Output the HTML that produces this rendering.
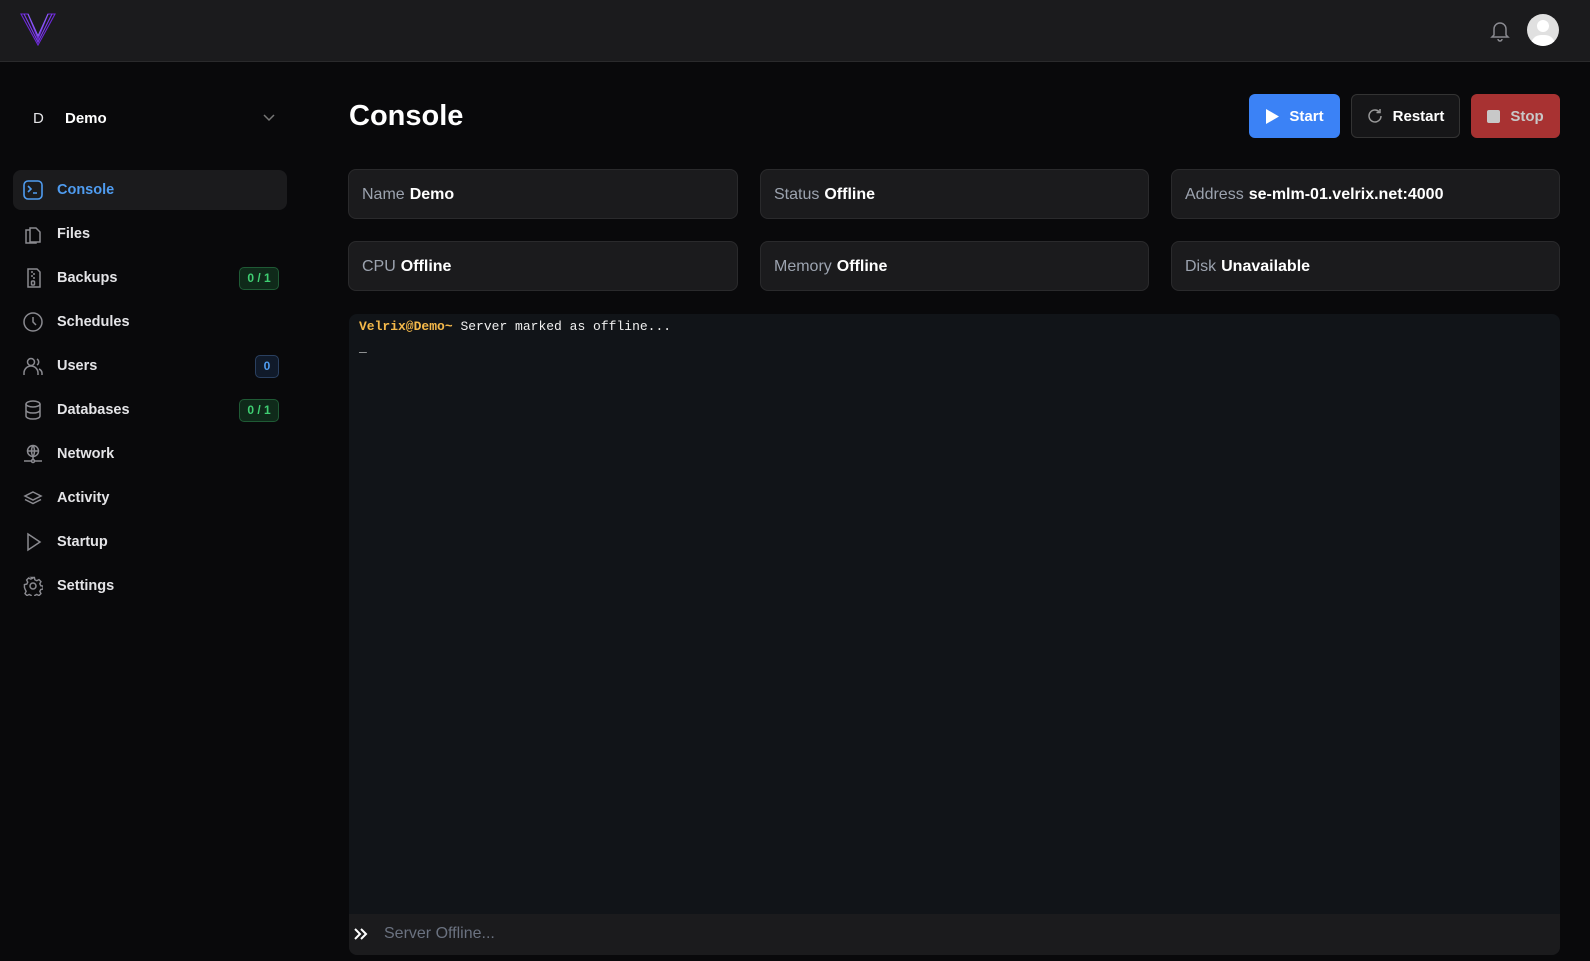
<!DOCTYPE html>
<html><head><meta charset="utf-8"><style>
*{box-sizing:border-box;margin:0;padding:0}
body{width:1590px;height:961px;background:#09090b;font-family:"Liberation Sans",sans-serif;color:#fff;position:relative;overflow:hidden}
.hdr{position:absolute;left:0;top:0;width:1590px;height:62px;background:#1b1b1d;border-bottom:1px solid #2a2a2c}
.abs{position:absolute}
.nav{position:absolute;left:13px;width:274px;height:40px;border-radius:8px;display:flex;align-items:center;font-size:14.5px;font-weight:bold;color:#e4e4e7}
.nav svg{position:absolute;left:10px;top:10px}
.nav span{position:absolute;left:44px}
.nav.act{background:#1b1b1d;color:#4f9cf0}
.badge{position:absolute;right:8px;height:23px;border-radius:5px;font-size:12px;font-weight:bold;display:flex;align-items:center;justify-content:center}
.g{background:#0f2a1a;border:1px solid #1f5a35;color:#3fcf72;width:40px}
.b{background:#101a2a;border:1px solid #2a4060;color:#4f9cf0;width:24px}
.card{position:absolute;height:50px;background:#1b1b1d;border:1px solid #2a2a2c;border-radius:8px;font-size:16px;color:#9ca3af;padding-left:13px;padding-top:2px;display:flex;align-items:center}
.card b{color:#fff;margin-left:5px}
.btn{position:absolute;top:94px;height:44px;border-radius:6px;font-size:15px;font-weight:bold;display:flex;align-items:center;justify-content:center;gap:10px}
</style></head><body>
<div class="hdr">
<svg class="abs" style="left:20px;top:13px" width="36" height="33" viewBox="0 0 36 33"><g fill="none" stroke-width="1.1"><path d="M1 1h7l10 25 10-25h7L18 32z" stroke="#6d28d9"/><path d="M4 1l14 28L32 1" stroke="#7c3aed"/><path d="M8 1l10 22L28 1" stroke="#8b5cf6"/></g></svg>
<svg class="abs" style="left:1490px;top:20px" width="20" height="22" viewBox="0 0 20 22" fill="none" stroke="#8a8a90" stroke-width="1.5"><path d="M4 15V9a6 6 0 0112 0v6l2 2H2z"/><path d="M8 19a2 2 0 004 0"/></svg>
<div class="abs" style="left:1527px;top:14px;width:32px;height:32px;border-radius:50%;background:#e0e0e0;overflow:hidden"><div class="abs" style="left:10px;top:6px;width:12px;height:12px;border-radius:50%;background:#fff"></div><div class="abs" style="left:4px;top:21px;width:24px;height:16px;border-radius:10px 10px 0 0;background:#fff"></div></div>
</div>
<div class="abs" style="left:33px;top:110px;font-size:15px;color:#e4e4e7">D</div>
<div class="abs" style="left:65px;top:110px;font-size:15px;font-weight:bold">Demo</div>
<svg class="abs" style="left:263px;top:114px" width="12" height="8" viewBox="0 0 12 8" fill="none" stroke="#777" stroke-width="1.5"><path d="M1 1l5 5 5-5"/></svg>

<div class="nav act" style="top:170px"><svg width="20" height="20" viewBox="0 0 20 20" fill="none" stroke="#4f9cf0" stroke-width="1.6"><rect x="1" y="1" width="18" height="18" rx="4"/><path d="M5 6l3 3-3 3M10 13h4"/></svg><span>Console</span></div>
<div class="nav" style="top:214px"><svg width="20" height="20" viewBox="0 0 20 20" fill="none" stroke="#8a8a90" stroke-width="1.5"><path d="M7 4h6l4 4v10H7z"/><path d="M7 6H3v13h10v-1"/></svg><span>Files</span></div>
<div class="nav" style="top:258px"><svg width="20" height="20" viewBox="0 0 20 20" fill="none" stroke="#8a8a90" stroke-width="1.5"><path d="M5 1h9l3 3v15H5z"/><path d="M9 3v2M11 5v2M9 7v2M11 9v2"/><rect x="8.5" y="13" width="3" height="4" rx="1"/></svg><span>Backups</span><div class="badge g">0 / 1</div></div>
<div class="nav" style="top:302px"><svg width="20" height="20" viewBox="0 0 20 20" fill="none" stroke="#8a8a90" stroke-width="1.5"><circle cx="10" cy="10" r="9"/><path d="M10 5v5l3 3"/></svg><span>Schedules</span></div>
<div class="nav" style="top:346px"><svg width="20" height="20" viewBox="0 0 20 20" fill="none" stroke="#8a8a90" stroke-width="1.5"><circle cx="8" cy="6" r="3.5"/><path d="M1 19v-2a6 6 0 0114 0v2M14 3a3.5 3.5 0 010 6M19 19v-2a5 5 0 00-3-4"/></svg><span>Users</span><div class="badge b">0</div></div>
<div class="nav" style="top:390px"><svg width="20" height="20" viewBox="0 0 20 20" fill="none" stroke="#8a8a90" stroke-width="1.5"><ellipse cx="10" cy="4" rx="7" ry="3"/><path d="M3 4v12c0 1.7 3 3 7 3s7-1.3 7-3V4M3 10c0 1.7 3 3 7 3s7-1.3 7-3"/></svg><span>Databases</span><div class="badge g">0 / 1</div></div>
<div class="nav" style="top:434px"><svg width="20" height="20" viewBox="0 0 20 20" fill="none" stroke="#8a8a90" stroke-width="1.5"><circle cx="10" cy="7" r="5.5"/><path d="M4.5 7h11M10 1.5c-2 3-2 8 0 11M10 1.5c2 3 2 8 0 11M10 12.5v4M1 17h7M12 17h7"/><circle cx="10" cy="17" r="1.5"/></svg><span>Network</span></div>
<div class="nav" style="top:478px"><svg width="20" height="20" viewBox="0 0 20 20" fill="none" stroke="#8a8a90" stroke-width="1.5"><path d="M10 4l8 4-8 4-8-4z"/><path d="M2 11.5l8 4 8-4"/></svg><span>Activity</span></div>
<div class="nav" style="top:522px"><svg width="20" height="20" viewBox="0 0 20 20" fill="none" stroke="#8a8a90" stroke-width="1.5"><path d="M5 2l12 8-12 8z"/></svg><span>Startup</span></div>
<div class="nav" style="top:566px"><svg width="20" height="20" viewBox="0 0 20 20" fill="none" stroke="#8a8a90" stroke-width="1.5"><circle cx="10" cy="10" r="3"/><path d="M8.5 1h3l.5 2.5 2 1 2.3-1.2 2.1 2.1-1.2 2.3 1 2 2.5.5v3l-2.5.5-1 2 1.2 2.3-2.1 2.1-2.3-1.2-2 1-.5 2.5h-3l-.5-2.5-2-1-2.3 1.2-2.1-2.1 1.2-2.3-1-2L1 11.5v-3l2.5-.5 1-2-1.2-2.3 2.1-2.1 2.3 1.2 2-1z" transform="scale(.95) translate(.5 .5)"/></svg><span>Settings</span></div>

<div class="abs" style="left:349px;top:100px;font-size:29px;font-weight:bold">Console</div>
<div class="btn" style="left:1249px;width:91px;background:#3b82f6"><svg width="14" height="15" viewBox="0 0 14 15"><path d="M1 0l13 7.5L1 15z" fill="#fff"/></svg>Start</div>
<div class="btn" style="left:1351px;width:109px;background:#161618;border:1px solid #333"><svg width="16" height="16" viewBox="0 0 16 16" fill="none" stroke="#999" stroke-width="1.5"><path d="M14 8a6 6 0 11-2-4.5M13 1v3.5H9.5"/></svg>Restart</div>
<div class="btn" style="left:1471px;width:89px;background:#a83232;color:#c8c8c8"><div style="width:13px;height:13px;background:#c8c8c8;border-radius:2px"></div>Stop</div>

<div class="card" style="left:348px;top:169px;width:390px">Name<b>Demo</b></div>
<div class="card" style="left:760px;top:169px;width:389px">Status<b>Offline</b></div>
<div class="card" style="left:1171px;top:169px;width:389px">Address<b>se-mlm-01.velrix.net:4000</b></div>
<div class="card" style="left:348px;top:241px;width:390px">CPU<b>Offline</b></div>
<div class="card" style="left:760px;top:241px;width:389px">Memory<b>Offline</b></div>
<div class="card" style="left:1171px;top:241px;width:389px">Disk<b>Unavailable</b></div>

<div class="abs" style="left:349px;top:314px;width:1211px;height:641px;background:#111418;border-radius:8px;overflow:hidden">
<div class="abs" style="left:10px;top:4px;font-family:'Liberation Mono',monospace;font-size:13px;line-height:18px;white-space:pre"><span style="color:#f5b94a;font-weight:bold">Velrix@Demo~</span> <span style="color:#f0f0f0">Server marked as offline...</span></div>
<div class="abs" style="left:10px;top:26px;font-family:'Liberation Mono',monospace;font-size:13px;color:#ddd">_</div>
<div class="abs" style="left:0;top:600px;width:1211px;height:41px;background:#1b1b1d"><svg class="abs" style="left:5px;top:14px" width="14" height="12" viewBox="0 0 14 12" fill="none" stroke="#fff" stroke-width="2"><path d="M1 1l5 5-5 5M7 1l5 5-5 5"/></svg><div class="abs" style="left:35px;top:11px;font-size:16px;color:#6b7280">Server Offline...</div></div>
</div>
</body></html>
